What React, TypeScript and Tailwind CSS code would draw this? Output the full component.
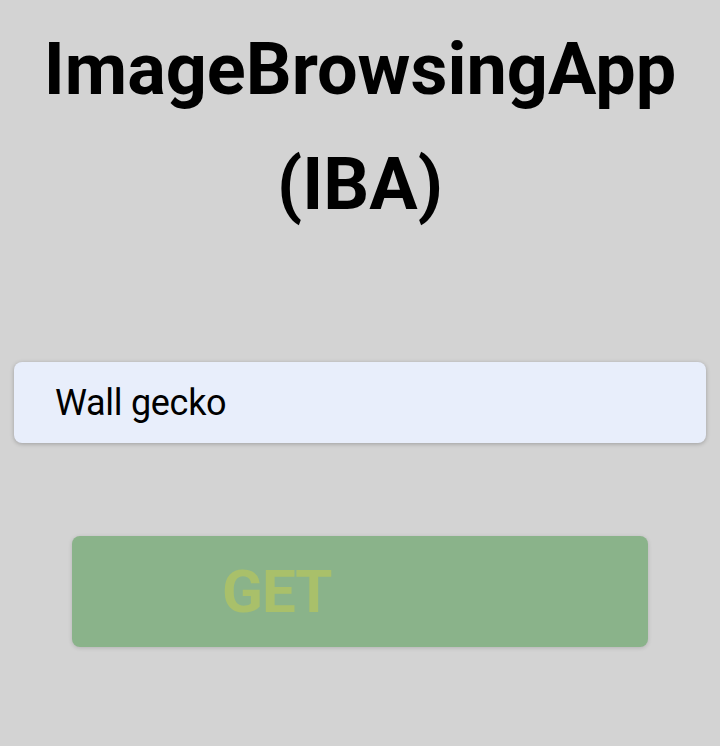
export default function App() {
  return (
    <div className="w-[720px] h-[746px] bg-[#d3d3d3] flex flex-col" style={{ fontFamily: "Roboto, 'Noto Sans', sans-serif" }}>
      <h1 className="mt-[12px] text-center text-[72px] leading-[115px] font-bold text-black">
        ImageBrowsingApp<br />(IBA)
      </h1>
      <div className="mt-[120px] mx-[14px] h-[81px] rounded-[8px] bg-[#e8eefb] shadow-[0_1px_4px_rgba(0,0,0,0.25)] flex items-center pl-[41px]">
        <span className="text-[36px] text-black tracking-[-0.3px]">Wall gecko</span>
      </div>
      <div className="mt-[93px] mx-[72px] h-[111px] rounded-[8px] bg-[#8ab38a] shadow-[0_1px_4px_rgba(0,0,0,0.15)] flex items-center pl-[150px]">
        <span className="text-[60px] font-bold text-[#a9c06a] tracking-[-1px]">GET</span>
      </div>
    </div>
  );
}
